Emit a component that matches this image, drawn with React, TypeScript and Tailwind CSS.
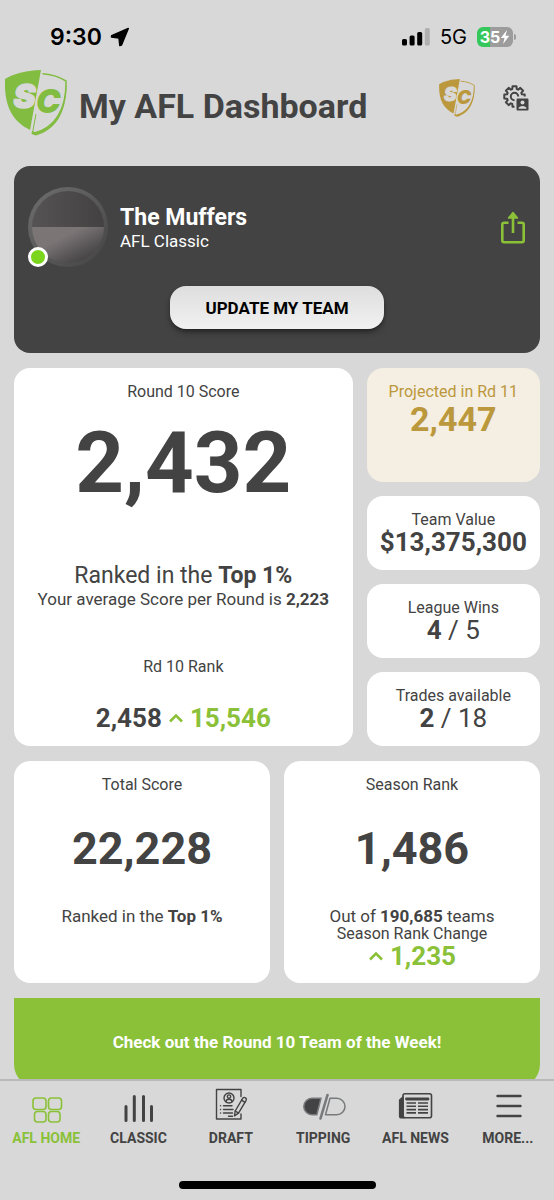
import type { ReactNode } from "react";

function ShieldLogo({ className }: { className: string }) {
  return (
    <svg viewBox="0 0 62 66" className={className} fill="currentColor" aria-hidden="true">
      <path d="M36 0C23 .2 9 3.500 0 9C-1 34 6 51 25 60Z" />
      <path d="M37.500 3.800C47 4.300 54 6.800 61 11C61.500 38 51 58 29 63.500" fill="none" stroke="currentColor" strokeWidth="1.500" />
      <path d="M61 20C58 43 47 58 30 62L27 61L26.500 64L31 65.500C50 60 62 44 61.700 12Z" />
      <path d="M31 44L27.500 63" fill="none" stroke="currentColor" strokeWidth="1" />
      <text y="37.500" fontFamily="Inter, sans-serif" fontWeight="900" fontStyle="italic" fontSize="33" stroke="#d8d8d8" paintOrder="stroke">
        <tspan x="8.500" fill="#d8d8d8" strokeWidth="1.500">S</tspan>
        <tspan x="31" dy="5.500" strokeWidth="3">C</tspan>
      </text>
    </svg>
  );
}

function StatusBar() {
  return (
    <div className="flex h-15 shrink-0 items-center justify-between pt-3.5 pr-9.5 pl-12.5 font-['Inter',sans-serif] text-black">
      <div className="flex items-center gap-2">
        <span className="text-[23px] leading-7 font-semibold">9:30</span>
        <svg viewBox="0 0 20 20" className="size-5" stroke="currentColor" strokeLinejoin="round" aria-hidden="true">
          <path d="M18.300 1.500L11.500 18L9.800 18.500L9 11L1.500 10L1.700 8.600Z" strokeWidth="1.500" />
        </svg>
      </div>
      <div className="flex items-center gap-2.5">
        <svg viewBox="0 0 28 18" className="h-4.5 w-7" aria-hidden="true">
          <rect x="0" y="11" width="5" height="6.500" rx="1.500" />
          <rect x="7.600" y="7.500" width="5" height="10" rx="1.500" />
          <rect x="15.200" y="4" width="5" height="13.500" rx="1.500" />
          <rect x="22.800" y="0" width="5" height="17.500" rx="1.500" fill="#b0b0b0" />
        </svg>
        <span className="text-xl leading-7">5G</span>
        <div className="flex items-center gap-px">
          <div className="flex h-5 w-9 items-center justify-center rounded-md bg-linear-to-r from-[#34c759] from-35% to-[#9c9c9c] to-35% text-base font-bold text-white">
            35
            <svg viewBox="0 0 9 14" className="h-3.5 w-2.5" fill="currentColor" aria-hidden="true">
              <path d="M6.500 0L.3 8H4L2.600 14L8.800 5.800H5Z" />
            </svg>
          </div>
          <span className="h-1.5 w-0.5 rounded-r-full bg-[#9c9c9c]" />
        </div>
      </div>
    </div>
  );
}

const toothProfile: [number, number][] = [
  [7.7, -17],
  [10.4, -11],
  [10.4, 11],
  [7.7, 17],
];

const gearPath =
  "M" +
  Array.from({ length: 8 }, (_, tooth) =>
    toothProfile
      .map(([radius, offset]) => {
        const angle = ((tooth * 45 + offset) * Math.PI) / 180;
        return `${(11.5 + radius * Math.sin(angle)).toFixed(2)} ${(11.5 - radius * Math.cos(angle)).toFixed(2)}`;
      })
      .join("L"),
  ).join("L") +
  "Z";

function SettingsIcon() {
  return (
    <svg viewBox="0 0 26 26" className="size-6.5" fill="none" stroke="currentColor" strokeLinejoin="round" aria-hidden="true">
      <path d={gearPath} strokeWidth="2" />
      <circle cx="11.500" cy="11.500" r="3.700" strokeWidth="2" />
      <rect x="11.500" y="11.500" width="15" height="15" fill="#d8d8d8" stroke="none" />
      <rect x="13.500" y="13.500" width="12" height="12" rx="1.200" fill="currentColor" stroke="none" />
      <circle cx="19.500" cy="17.500" r="2" fill="#d8d8d8" stroke="none" />
      <path d="M15.500 23.800C15.500 20 23.500 20 23.500 23.800Z" fill="#d8d8d8" stroke="none" />
    </svg>
  );
}

function Header() {
  return (
    <header className="flex h-[86px] shrink-0 items-center pr-[25px] pl-[5px]">
      <ShieldLogo className="h-[66px] w-[62px] text-[#82bc41]" />
      <h1 className="mt-1.5 ml-3 text-[34px] leading-10 font-bold whitespace-nowrap">My AFL Dashboard</h1>
      <div className="mb-2.5 ml-auto flex items-center gap-7">
        <button type="button" aria-label="SuperCoach Gold">
          <ShieldLogo className="h-[38px] w-9 text-[#bc983c]" />
        </button>
        <button type="button" aria-label="Account settings">
          <SettingsIcon />
        </button>
      </div>
    </header>
  );
}

function TeamCard() {
  return (
    <section className="rounded-2xl bg-[#434343] px-3.5 pt-[21px] pb-6 text-white">
      <div className="flex items-center gap-3">
        <div className="relative size-20 rounded-full bg-linear-to-br from-[#6f6f6f] to-[#444444] p-1">
          <div className="size-full overflow-hidden rounded-full">
            <div className="h-1/2 bg-linear-to-r from-[#565354] to-[#434142]" />
            <div className="h-1/2 bg-linear-to-br from-[#7b7576] from-35% to-[#484647] to-80%" />
          </div>
          <span className="absolute bottom-0 left-0 size-5 rounded-full border-3 border-white bg-[#7bd51d]" />
        </div>
        <div className="pt-0.5">
          <h2 className="text-[23px] leading-[26px] font-bold">The Muffers</h2>
          <p className="text-[17px] leading-5">AFL Classic</p>
        </div>
        <button type="button" aria-label="Share" className="ml-auto text-[#8ac138]">
          <svg viewBox="0 0 26 34" className="h-[34px] w-6.5" fill="none" stroke="currentColor" strokeWidth="2.600" strokeLinejoin="round" aria-hidden="true">
            <path d="M8.500 12.800H4Q2.300 12.800 2.300 14.500V30.500Q2.300 32.200 4 32.200H22Q23.700 32.200 23.700 30.500V14.500Q23.700 12.800 22 12.800H17.500" />
            <path d="M13 23V5" />
            <path d="M13 2.500L17.500 8H8.500Z" fill="currentColor" strokeWidth="1.500" />
          </svg>
        </button>
      </div>
      <button
        type="button"
        className="mx-auto mt-[19px] block h-[43px] rounded-2xl bg-linear-to-b from-[#dedede] to-[#f1f1f1] px-[35px] pt-0.5 text-[17px] font-bold text-black shadow-md shadow-black/40"
      >
        UPDATE MY TEAM
      </button>
    </section>
  );
}

function Label({ children }: { children: ReactNode }) {
  return <h3 className="text-base leading-[22px]">{children}</h3>;
}

function Card({ children }: { children: ReactNode }) {
  return <section className="rounded-2xl bg-white pt-[13px] pb-3 text-center whitespace-nowrap">{children}</section>;
}

function Caret() {
  return (
    <svg viewBox="0 0 16 12" className="h-3 w-4" fill="none" stroke="currentColor" strokeWidth="2.600" aria-label="up">
      <path d="M2 9.500L8 3.500L14 9.500" />
    </svg>
  );
}

function SmallStat({ label, value, total }: { label: string; value: string; total?: string }) {
  return (
    <section className="rounded-2xl bg-white pt-[13px] pb-[17px] text-center whitespace-nowrap">
      <Label>{label}</Label>
      <p className="text-[26px] leading-[22px]">
        <b>{value}</b>
        {total && ` / ${total}`}
      </p>
    </section>
  );
}

const navItems = [
  {
    label: "AFL HOME",
    icon: (
      <g strokeWidth="1.600">
        <rect x="11" y="14" width="13" height="11.500" rx="3" />
        <rect x="26.500" y="14" width="13" height="11.500" rx="3" />
        <rect x="12.500" y="27.500" width="11.500" height="10.500" rx="3" />
        <rect x="26.500" y="27.500" width="11.500" height="10.500" rx="3" />
      </g>
    ),
  },
  {
    label: "CLASSIC",
    icon: <path d="M12 22.500V36.500M20.300 12.500V36.500M29.500 12.500V36.500M37.500 22.500V36.500" strokeWidth="3" />,
  },
  {
    label: "DRAFT",
    icon: (
      <g strokeWidth="1.400">
        <path d="M34 12.500V5.500H9.500V35H34V30" />
        <circle cx="22" cy="14" r="5" />
        <circle cx="22" cy="12.600" r="1.700" />
        <path d="M19 17.800Q19 15.200 22 15.200T25 17.800" />
        <path d="M16.500 21.800H25M16.500 25.500H26M16.500 29H25.500M21.500 32.300H25.500" />
        <path d="M13.500 21.800H13.600M13.500 25.500H13.600M13.500 29H13.600" />
        <path d="M27.500 31.800L28.200 27L35.800 14.200Q37 12.800 38.500 13.800T39.100 16.400L31.500 29.200Z" />
        <path d="M34.600 16.200L38 18.300M28.200 27L31.500 29.200" />
      </g>
    ),
  },
  {
    label: "TIPPING",
    icon: (
      <g stroke="#77797b" strokeWidth="1.500">
        <path d="M22 14.300H13A8.200 8.200 0 0 0 13 30.700H17.800Z" fill="#434345" />
        <path d="M28.500 11L21.500 34.500" strokeWidth="2.600" />
        <path d="M31 14.300H37.800A8.200 8.200 0 0 1 37.800 30.700H26.500Z" />
      </g>
    ),
  },
  {
    label: "AFL NEWS",
    icon: (
      <g strokeWidth="1.600">
        <path d="M12 13L8.700 16V32Q8.700 33.800 10.500 33.800H13L12 32Z" fill="currentColor" />
        <rect x="12" y="9.800" width="28.500" height="24" rx="2" />
        <path d="M15.500 15H37" strokeWidth="2.800" />
        <path d="M15.500 19H25M27 19H37M15.500 22.300H25M27 22.300H37M15.500 25.600H25M27 25.600H37M15.500 28.900H25M27 28.900H37" strokeLinecap="butt" />
      </g>
    ),
  },
  { label: "MORE...", icon: <path d="M13.500 12H36.500M13.500 22H36.500M13.500 32H36.500" strokeWidth="2.400" /> },
];

function BottomNav() {
  return (
    <nav className="flex shrink-0 flex-col border-t-2 border-[#b9b9b9] pt-[3px] pb-[11px]">
      <ul className="grid grid-cols-6">
        {navItems.map((item, i) => (
          <li key={item.label}>
            <a href="#" className={i === 0 ? "flex flex-col items-center text-[#8ac138]" : "flex flex-col items-center"}>
              <svg viewBox="0 0 48 40" className="h-10 w-12" fill="none" stroke="currentColor" strokeLinecap="round" strokeLinejoin="round" aria-hidden="true">
                {item.icon}
              </svg>
              <span className="mt-1 text-sm leading-5 font-bold whitespace-nowrap">{item.label}</span>
            </a>
          </li>
        ))}
      </ul>
      <div className="mx-auto mt-[33px] h-2 w-[197px] rounded-full bg-black" />
    </nav>
  );
}

export default function App() {
  return (
    <div className="flex h-screen flex-col bg-[#d8d8d8] font-['Roboto',sans-serif] text-[#434343]">
      <StatusBar />
      <Header />
      <main className="flex min-h-0 flex-1 flex-col gap-[15px] overflow-y-auto px-3.5 pt-5 [scrollbar-width:none] *:shrink-0">
        <TeamCard />
        <div className="grid grid-cols-[338fr_173fr] gap-3.5">
          <Card>
            <Label>Round 10 Score</Label>
            <p className="mt-3 text-[85px] leading-24 font-bold">2,432</p>
            <p className="mt-[52px] text-[23px] leading-[26px]">
              Ranked in the <b>Top 1%</b>
            </p>
            <p className="text-[17px] leading-5">
              Your average Score per Round is <b>2,223</b>
            </p>
            <div className="mt-[47px]">
              <Label>Rd 10 Rank</Label>
            </div>
            <p className="mt-6 flex items-center justify-center gap-1.5 text-[26px] leading-8 font-bold">
              2,458
              <span className="flex items-center gap-1.5 text-[#8ac138]">
                <Caret />
                15,546
              </span>
            </p>
          </Card>
          <div className="flex flex-col gap-3.5">
            <section className="flex-1 rounded-2xl bg-[#f4eee3] pt-[13px] text-center whitespace-nowrap text-[#bc983c]">
              <Label>Projected in Rd 11</Label>
              <p className="text-[34px] leading-8 font-bold">2,447</p>
            </section>
            <SmallStat label="Team Value" value="$13,375,300" />
            <SmallStat label="League Wins" value="4" total="5" />
            <SmallStat label="Trades available" value="2" total="18" />
          </div>
        </div>
        <div className="grid grid-cols-2 gap-3.5">
          <Card>
            <Label>Total Score</Label>
            <p className="mt-[29px] text-[45px] leading-12 font-bold">22,228</p>
            <p className="mt-[34px] text-[17px] leading-[18px]">
              Ranked in the <b>Top 1%</b>
            </p>
          </Card>
          <Card>
            <Label>Season Rank</Label>
            <p className="mt-[29px] text-[45px] leading-12 font-bold">1,486</p>
            <p className="mt-[34px] text-[17px] leading-[18px]">
              Out of <b>190,685</b> teams
            </p>
            <h3 className="text-base leading-[18px]">Season Rank Change</h3>
            <p className="mb-0.5 flex items-center justify-center gap-1.5 text-[26px] leading-[26px] font-bold text-[#8ac138]">
              <Caret />
              1,235
            </p>
          </Card>
        </div>
        <a href="#" className="flex h-[90px] items-center justify-center rounded-b-3xl bg-[#8ac138] text-[17px] font-bold text-white">
          Check out the Round 10 Team of the Week!
        </a>
      </main>
      <BottomNav />
    </div>
  );
}
